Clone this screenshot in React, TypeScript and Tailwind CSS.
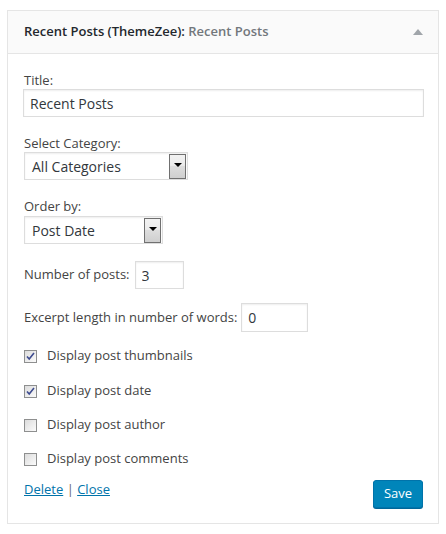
import type { ReactNode } from "react";

const SelectBox = ({ value, width, className }: { value: string; width: string; className?: string }) => (
	<div
		className={`flex h-[28px] items-center justify-between border border-[#ddd] bg-white pl-[7px] pr-[1px] shadow-[inset_0_1px_2px_rgba(0,0,0,0.07)] ${width} ${className ?? ""}`}
	>
		<span className="text-[14px] text-[#32373c]">{value}</span>
		<span className="flex h-[25px] w-[17px] flex-col items-center border border-[#707070] bg-[linear-gradient(to_bottom,#f2f2f2_0%,#ebebeb_45%,#dddddd_50%,#cfcfcf_100%)] pt-[8px]">
			<span className="h-0 w-0 border-x-[4px] border-t-[4px] border-x-transparent border-t-black" />
		</span>
	</div>
);

const CheckBox = ({ checked }: { checked: boolean }) => (
	<span className="flex h-[13px] w-[13px] shrink-0 items-center justify-center border border-[#8e8f8f] bg-[linear-gradient(to_bottom_right,#dcdcdc,#fbfbfb)]">
		{checked && (
			<svg width="9" height="9" viewBox="0 0 9 9">
				<path
					d="M1 4.5 L3.2 7 L8 1"
					fill="none"
					stroke="#3d4b8f"
					strokeWidth="1.6"
				/>
			</svg>
		)}
	</span>
);

const CheckRow = ({
	checked,
	label,
	className,
}: {
	checked: boolean;
	label: string;
	className: string;
}) => (
	<div className={`flex h-[20px] items-center gap-[10px] ${className}`}>
		<CheckBox checked={checked} />
		<span>{label}</span>
	</div>
);

const Label = ({ children, className }: { children: ReactNode; className: string }) => (
	<p className={`h-[18px] leading-[18px] ${className}`}>{children}</p>
);

const App = () => {
	return (
		<div className="min-h-[534px] w-[446px] bg-white pl-[7px] pt-[10px] font-['Open_Sans',sans-serif] text-[13px] text-[#444]">
			<div className="w-[432px] border border-[#e5e5e5] bg-white">
				<div className="flex h-[43px] items-center justify-between border-b border-[#e5e5e5] bg-[#fafafa] pl-[16px] pr-[15px]">
					<h3 className="text-[13px] font-semibold text-[#23282d]">
						Recent Posts (ThemeZee):{" "}
						<span className="text-[#72777c]">Recent Posts</span>
					</h3>
					<span className="h-0 w-0 border-x-[5px] border-b-[6px] border-x-transparent border-b-[#a0a5aa]" />
				</div>

				<div className="pb-[15px] pl-[16px] pr-[14px] pt-[17px]">
					<Label className="">Title:</Label>
					<input
						className="-ml-[1px] block h-[28px] w-[401px] border border-[#ddd] px-[6px] text-[14px] text-[#32373c] shadow-[inset_0_1px_2px_rgba(0,0,0,0.07)] outline-none"
						defaultValue="Recent Posts"
					/>

					<Label className="mt-[17px]">Select Category:</Label>
					<SelectBox value="All Categories" width="w-[164px]" />

					<Label className="mt-[17px]">Order by:</Label>
					<SelectBox value="Post Date" width="w-[139px]" className="mt-[1px]" />

					<div className="mt-[17px] flex h-[28px] items-center gap-[5px]">
						<span>Number of posts:</span>
						<input
							className="block h-[28px] w-[49px] border border-[#ddd] px-[6px] text-[14px] text-[#32373c] shadow-[inset_0_1px_2px_rgba(0,0,0,0.07)] outline-none"
							defaultValue="3"
						/>
					</div>

					<div className="mt-[14px] flex h-[29px] items-center gap-[4px]">
						<span>Excerpt length in number of words:</span>
						<input
							className="block h-[29px] w-[67px] border border-[#ddd] px-[6px] text-[14px] text-[#32373c] shadow-[inset_0_1px_2px_rgba(0,0,0,0.07)] outline-none"
							defaultValue="0"
						/>
					</div>

					<CheckRow checked label="Display post thumbnails" className="mt-[14px]" />
					<CheckRow checked label="Display post date" className="mt-[15px]" />
					<CheckRow checked={false} label="Display post author" className="mt-[14px]" />
					<CheckRow checked={false} label="Display post comments" className="mt-[14px]" />

					<div className="mt-[11px] flex items-start justify-between">
						<div className="leading-[18px]">
							<a href="#" className="text-[#0073aa] underline">
								Delete
							</a>
							<span className="text-[#666]"> | </span>
							<a href="#" className="text-[#0073aa] underline">
								Close
							</a>
						</div>
						<button className="mr-[1px] h-[28px] w-[50px] rounded-[3px] border border-[#0073aa] bg-[#0085ba] text-[13px] text-white shadow-[0_1px_0_#006799]">
							Save
						</button>
					</div>
				</div>
			</div>
		</div>
	);
};

export default App;
